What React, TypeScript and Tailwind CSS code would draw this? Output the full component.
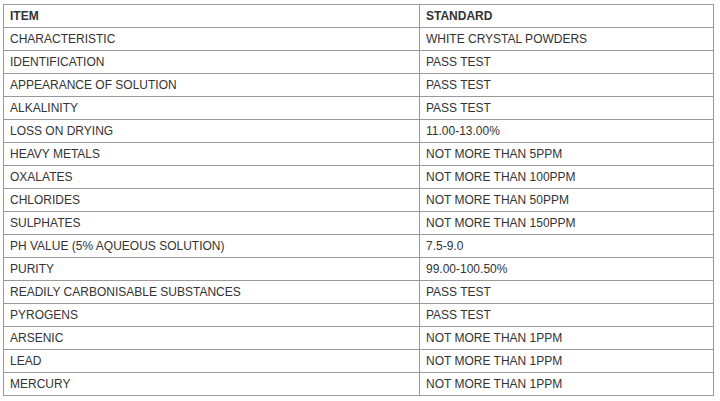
const rows: [string, string][] = [
  ['CHARACTERISTIC', 'WHITE CRYSTAL POWDERS'],
  ['IDENTIFICATION', 'PASS TEST'],
  ['APPEARANCE OF SOLUTION', 'PASS TEST'],
  ['ALKALINITY', 'PASS TEST'],
  ['LOSS ON DRYING', '11.00-13.00%'],
  ['HEAVY METALS', 'NOT MORE THAN 5PPM'],
  ['OXALATES', 'NOT MORE THAN 100PPM'],
  ['CHLORIDES', 'NOT MORE THAN 50PPM'],
  ['SULPHATES', 'NOT MORE THAN 150PPM'],
  ['PH VALUE (5% AQUEOUS SOLUTION)', '7.5-9.0'],
  ['PURITY', '99.00-100.50%'],
  ['READILY CARBONISABLE SUBSTANCES', 'PASS TEST'],
  ['PYROGENS', 'PASS TEST'],
  ['ARSENIC', 'NOT MORE THAN 1PPM'],
  ['LEAD', 'NOT MORE THAN 1PPM'],
  ['MERCURY', 'NOT MORE THAN 1PPM'],
];

export default function App() {
  return (
    <div className="bg-white pl-[3px] pt-[4px] font-['Liberation_Sans',Arial,sans-serif] text-[12px] text-[#333]">
      <table className="w-[711px] table-fixed border-collapse">
        <colgroup>
          <col className="w-[416px]" />
          <col />
        </colgroup>
        <thead>
          <tr className="h-[23px]">
            <th className="border border-[#999] px-[6px] py-0 text-left font-bold">ITEM</th>
            <th className="border border-[#999] px-[6px] py-0 text-left font-bold">STANDARD</th>
          </tr>
        </thead>
        <tbody>
          {rows.map(([item, standard]) => (
            <tr key={item} className="h-[23px]">
              <td className="border border-[#999] px-[6px] py-0">{item}</td>
              <td className="border border-[#999] px-[6px] py-0">{standard}</td>
            </tr>
          ))}
        </tbody>
      </table>
    </div>
  );
}
